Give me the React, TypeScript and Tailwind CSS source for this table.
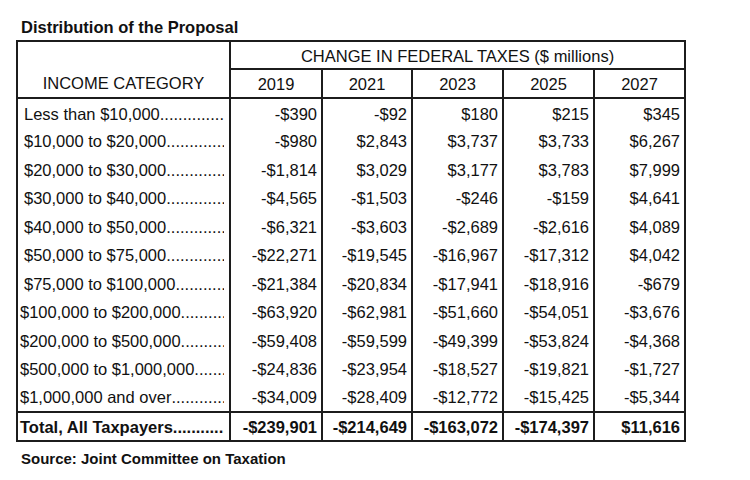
import React from "react";

type Row = { label: string; values: string[]; tight?: boolean };

const rows: Row[] = [
  { label: "Less than $10,000", values: ["-$390", "-$92", "$180", "$215", "$345"] },
  { label: "$10,000 to $20,000", values: ["-$980", "$2,843", "$3,737", "$3,733", "$6,267"] },
  { label: "$20,000 to $30,000", values: ["-$1,814", "$3,029", "$3,177", "$3,783", "$7,999"] },
  { label: "$30,000 to $40,000", values: ["-$4,565", "-$1,503", "-$246", "-$159", "$4,641"] },
  { label: "$40,000 to $50,000", values: ["-$6,321", "-$3,603", "-$2,689", "-$2,616", "$4,089"] },
  { label: "$50,000 to $75,000", values: ["-$22,271", "-$19,545", "-$16,967", "-$17,312", "$4,042"] },
  { label: "$75,000 to $100,000", values: ["-$21,384", "-$20,834", "-$17,941", "-$18,916", "-$679"] },
  { label: "$100,000 to $200,000", values: ["-$63,920", "-$62,981", "-$51,660", "-$54,051", "-$3,676"], tight: true },
  { label: "$200,000 to $500,000", values: ["-$59,408", "-$59,599", "-$49,399", "-$53,824", "-$4,368"], tight: true },
  { label: "$500,000 to $1,000,000", values: ["-$24,836", "-$23,954", "-$18,527", "-$19,821", "-$1,727"], tight: true },
  { label: "$1,000,000 and over", values: ["-$34,009", "-$28,409", "-$12,772", "-$15,425", "-$5,344"], tight: true },
];

const years = ["2019", "2021", "2023", "2025", "2027"];
const totals = ["-$239,901", "-$214,649", "-$163,072", "-$174,397", "$11,616"];
const DOTS = ".".repeat(60);

function Label({ text, bold, tight }: { text: string; bold?: boolean; tight?: boolean }) {
  return (
    <div className={`flex w-full items-center whitespace-nowrap ${tight ? "pl-[2px]" : "pl-[6px]"} pr-[5px] ${bold ? "font-bold" : ""}`}>
      <span className="shrink-0">{text}</span>
      <span className="w-0 min-w-0 flex-1 overflow-hidden">{DOTS}</span>
    </div>
  );
}

export default function App() {
  return (
    <div
      className="h-[480px] w-[750px] overflow-hidden bg-white text-[#111]"
      style={{ fontFamily: '"Liberation Sans", Arial, sans-serif' }}
    >
      <div className="pl-[21px] pt-[17px] text-[16.5px] font-bold leading-[20px]">Distribution of the Proposal</div>
      <table className="ml-[16px] mt-[3px] w-[670px] table-fixed border-collapse border-2 border-[#1c1c1c] text-[16.5px] leading-[20px]">
        <colgroup>
          <col className="w-[213px]" />
          <col className="w-[92px]" />
          <col className="w-[90px]" />
          <col className="w-[91px]" />
          <col className="w-[91px]" />
          <col className="w-[91px]" />
        </colgroup>
        <thead>
          <tr className="h-[28px]">
            <th rowSpan={2} className="border-2 border-[#1c1c1c] p-0 pb-[4px] align-bottom font-normal">
              INCOME CATEGORY
            </th>
            <th colSpan={5} className="border-2 border-[#1c1c1c] p-0 pt-[2px] font-normal">
              CHANGE IN FEDERAL TAXES ($ millions)
            </th>
          </tr>
          <tr className="h-[29px]">
            {years.map((y) => (
              <th key={y} className="border-2 border-[#1c1c1c] p-0 pt-[1px] font-normal">
                {y}
              </th>
            ))}
          </tr>
        </thead>
        <tbody>
          {rows.map((r, i) => (
            <tr key={r.label} className="h-[28.5px]">
              <td className={`overflow-hidden border-x-2 border-[#1c1c1c] p-0 ${i === 0 ? "pt-[3px]" : "pt-[1px]"}`}>
                <Label text={r.label} tight={r.tight} />
              </td>
              {r.values.map((v, j) => (
                <td key={j} className={`border-x-2 border-[#1c1c1c] p-0 pr-[4px] text-right ${i === 0 ? "pt-[3px]" : "pt-[1px]"}`}>
                  {v}
                </td>
              ))}
            </tr>
          ))}
          <tr className="h-[29px] font-bold">
            <td className="overflow-hidden border-2 border-[#1c1c1c] p-0 pt-[1px]">
              <Label text="Total, All Taxpayers" bold tight />
            </td>
            {totals.map((v, j) => (
              <td key={j} className="border-2 border-[#1c1c1c] p-0 pr-[4px] pt-[1px] text-right">
                {v}
              </td>
            ))}
          </tr>
        </tbody>
      </table>
      <div className="pl-[21px] pt-[8px] text-[15px] font-bold leading-[18px]">Source: Joint Committee on Taxation</div>
    </div>
  );
}
